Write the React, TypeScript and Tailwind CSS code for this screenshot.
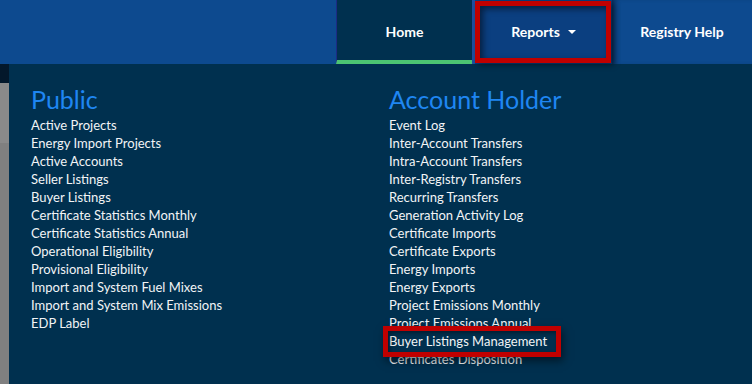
import { useState } from 'react'

const publicLinks = [
    "Active Projects",
    "Energy Import Projects",
    "Active Accounts",
    "Seller Listings",
    "Buyer Listings",
    "Certificate Statistics Monthly",
    "Certificate Statistics Annual",
    "Operational Eligibility",
    "Provisional Eligibility",
    "Import and System Fuel Mixes",
    "Import and System Mix Emissions",
    "EDP Label",
]

const holderLinks = [
    "Event Log",
    "Inter-Account Transfers",
    "Intra-Account Transfers",
    "Inter-Registry Transfers",
    "Recurring Transfers",
    "Generation Activity Log",
    "Certificate Imports",
    "Certificate Exports",
    "Energy Imports",
    "Energy Exports",
    "Project Emissions Monthly",
    "Project Emissions Annual",
    "Buyer Listings Management",
    "Certificates Disposition",
]

function LinkColumn({title, links}: {title: string, links: string[]}) {
    return (
        <div className="flex flex-col">
            <h2 className="text-[25px] leading-[28px] text-[#1f86f2]">{title}</h2>
            <ul className="mt-[3px] flex flex-col text-[13px] leading-[18px]">
                {links.map((link) => (
                    <li key={link} className="h-[18px]">
                        <a href="#" className="text-[#f2f4f6] hover:underline">{link}</a>
                    </li>
                ))}
            </ul>
        </div>
    )
}

export default function App() {
    const [open, setOpen] = useState<boolean>(true)

    return (
        <div className="relative w-[752px] h-[384px] overflow-hidden bg-[#0d4a8f]" style={{fontFamily: "Lato, 'Open Sans', sans-serif"}}>
            {/* top nav */}
            <nav className="flex h-16 bg-[#0d4a8f] text-[14px] font-bold text-white">
                <div className="flex-1" />
                <a href="#" className="flex w-[136px] items-center justify-center border-l border-[#1c2b86] border-b-4 border-b-[#4cc472] bg-[#00304f] pt-[2px]">
                    Home
                </a>
                <div className="w-[3px] bg-[#1f4fa0]" />
                <button
                    type="button"
                    onClick={() => setOpen(!open)}
                    className="flex w-[137px] items-center justify-center gap-2 bg-[#0b3f80] pb-px"
                >
                    Reports
                    <span className="h-0 w-0 border-x-4 border-t-4 border-x-transparent border-t-white" />
                </button>
                <a href="#" className="flex w-[140px] items-center justify-center pb-px shadow-[inset_6px_0_6px_-4px_rgba(0,0,0,0.45)]">
                    Registry Help
                </a>
            </nav>

            {/* dropdown */}
            {open && (
                <div className="flex h-[320px]">
                    <div className="flex w-[9px] flex-col">
                        <div className="h-[19px] bg-[#03182b]" />
                        <div className="h-[60px] bg-[#8a8a8a]" />
                        <div className="flex-1 bg-[#808080]" />
                    </div>
                    <div className="grid flex-1 grid-cols-[358px_1fr] bg-[#00304f] pl-[22px] pt-[21px]">
                        <LinkColumn title="Public" links={publicLinks} />
                        <LinkColumn title="Account Holder" links={holderLinks} />
                    </div>
                </div>
            )}

            {/* annotation boxes */}
            <div className="pointer-events-none absolute left-[475px] top-px h-[62px] w-[136px] border-[5px] border-[#c00000] shadow-[inset_3px_3px_6px_rgba(0,0,0,0.5),3px_2px_6px_rgba(0,0,0,0.45)]" />
            <div className="pointer-events-none absolute left-[383px] top-[326px] h-[31px] w-[178px] border-[5px] border-[#c00000] shadow-[inset_2px_2px_4px_rgba(0,0,0,0.4),2px_4px_8px_rgba(0,0,0,0.5)]" />
        </div>
    )
}
